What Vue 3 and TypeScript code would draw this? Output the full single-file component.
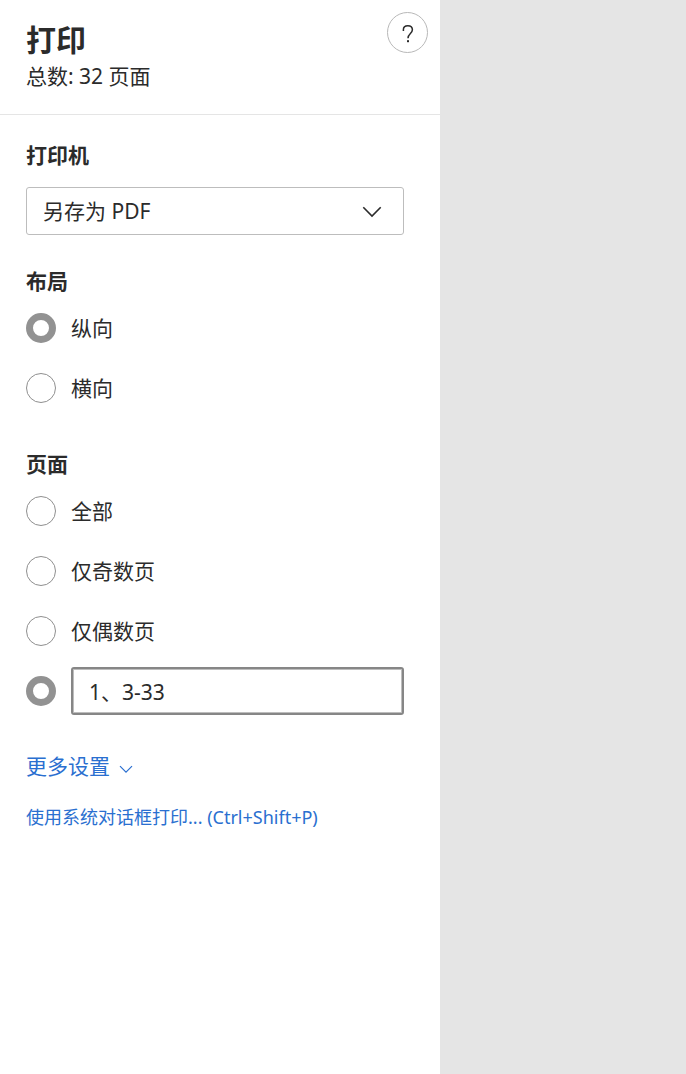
<script setup lang="ts">
import { ref } from 'vue'

interface Choice {
  value: string
  label: string
}

const layouts: Choice[] = [
  { value: 'portrait', label: '纵向' },
  { value: 'landscape', label: '横向' },
]
const pageChoices: Choice[] = [
  { value: 'all', label: '全部' },
  { value: 'odd', label: '仅奇数页' },
  { value: 'even', label: '仅偶数页' },
]

const totalPages = 32
const printer = ref('pdf')
const layout = ref('portrait')
const pages = ref('custom')
const range = ref('1、3-33')
</script>

<template>
  <div class="dialog">
    <main class="panel">
      <header class="header">
        <div>
          <h1 class="title">打印</h1>
          <p class="total">总数: {{ totalPages }} 页面</p>
        </div>
        <button class="help" type="button" aria-label="帮助">
          <svg width="12" height="20" viewBox="0 0 12 20" aria-hidden="true">
            <path
              d="M1.4 7V5.6C1.4 3.2 3.2 1.7 5.8 1.7S10.4 3.2 10.4 5.8C10.4 9.4 6 9.6 6 14.2"
              fill="none"
              stroke="currentColor"
              stroke-width="1.5"
            />
            <rect x="5" y="16.2" width="2" height="2" fill="currentColor" />
          </svg>
        </button>
      </header>

      <form class="settings" @submit.prevent>
        <section class="group">
          <h2 class="heading"><label for="printer">打印机</label></h2>
          <div class="picker">
            <select id="printer" v-model="printer" class="select">
              <option value="pdf">另存为 PDF</option>
            </select>
            <svg class="arrow" width="20" height="12" viewBox="0 0 20 12" aria-hidden="true">
              <path d="M1.3 1.3L10 10L18.7 1.3" fill="none" stroke="currentColor" stroke-width="1.6" />
            </svg>
          </div>
        </section>

        <section class="group" role="radiogroup" aria-labelledby="layout-heading">
          <h2 id="layout-heading" class="heading">布局</h2>
          <label v-for="item in layouts" :key="item.value" class="row">
            <input v-model="layout" class="radio" type="radio" name="layout" :value="item.value" />
            <span>{{ item.label }}</span>
          </label>
        </section>

        <section class="group" role="radiogroup" aria-labelledby="pages-heading">
          <h2 id="pages-heading" class="heading">页面</h2>
          <label v-for="item in pageChoices" :key="item.value" class="row">
            <input v-model="pages" class="radio" type="radio" name="pages" :value="item.value" />
            <span>{{ item.label }}</span>
          </label>
          <div class="row">
            <input v-model="pages" class="radio" type="radio" name="pages" value="custom" aria-label="自定义页面" />
            <input v-model="range" class="range" type="text" aria-label="页面范围" />
          </div>
        </section>

        <button class="more" type="button">
          更多设置
          <svg class="more-arrow" width="14" height="9" viewBox="0 0 14 9" aria-hidden="true">
            <path d="M1 1.2L7 7.2L13 1.2" fill="none" stroke="currentColor" stroke-width="1.2" />
          </svg>
        </button>
        <a class="system" href="#">使用系统对话框打印... (Ctrl+Shift+P)</a>
      </form>
    </main>
    <aside class="preview" aria-label="预览"></aside>
  </div>
</template>

<style>
body {
  margin: 0;
}
</style>

<style scoped>
.dialog {
  display: flex;
  min-height: 100vh;
  background: #fff;
  color: #2b2b2b;
  font-family: "Noto Sans", "Noto Sans CJK SC", sans-serif;
  font-size: 21px;
  line-height: 30px;
}

.dialog * {
  box-sizing: border-box;
}

.panel {
  flex: 0 1 440px;
  min-width: 0;
}

.preview {
  flex: 1;
  background: #e5e5e5;
}

.header {
  display: flex;
  justify-content: space-between;
  align-items: flex-start;
  padding: 12px 12px 23px 26px;
  border-bottom: 1px solid #e5e5e5;
}

.title {
  margin: 7px 0 0;
  font-size: 30px;
  font-weight: 700;
  line-height: 42px;
}

.total {
  margin: 0;
}

.help {
  display: flex;
  align-items: center;
  justify-content: center;
  width: 41px;
  height: 41px;
  padding: 2px 0 0;
  border: 1px solid #b8b8b8;
  border-radius: 50%;
  background: #fff;
  color: #2b2b2b;
}

.settings {
  display: flex;
  flex-direction: column;
  align-items: flex-start;
  padding: 23px 36px 24px 26px;
}

.group {
  width: 100%;
  margin-bottom: 29px;
}

.heading {
  margin: 0;
  font-size: 21px;
  font-weight: 700;
  line-height: 34px;
}

.picker {
  position: relative;
  margin-top: 15px;
}

.select {
  display: block;
  width: 100%;
  height: 48px;
  padding: 0 48px 0 16px;
  border: 1px solid #bdbdbd;
  border-radius: 3px;
  appearance: none;
  background: #fff;
  color: inherit;
  font: inherit;
}

.arrow {
  position: absolute;
  top: 19px;
  right: 22px;
  pointer-events: none;
}

.row {
  display: flex;
  align-items: center;
  gap: 15px;
  height: 60px;
}

.radio {
  flex: none;
  width: 30px;
  height: 30px;
  margin: 0;
  border: 1px solid #8f8f8f;
  border-radius: 50%;
  appearance: none;
  background: #fff;
}

.radio:checked {
  border: 7px solid #929292;
}

.range {
  flex: 1;
  min-width: 0;
  height: 48px;
  padding: 0 16px;
  border: 2px solid #868686;
  border-radius: 3px;
  outline: none;
  box-shadow: inset 0 0 0 1px #bdbdbd;
  background: #fff;
  color: inherit;
  font: inherit;
}

.more {
  display: flex;
  align-items: center;
  gap: 9px;
  padding: 0;
  border: 0;
  background: none;
  color: #2a6fd0;
  font: inherit;
  line-height: 32px;
}

.more-arrow {
  margin-top: 6px;
}

.system {
  margin-top: 19px;
  color: #2a6fd0;
  font-size: 18px;
  line-height: 32px;
  text-decoration: none;
}
</style>
